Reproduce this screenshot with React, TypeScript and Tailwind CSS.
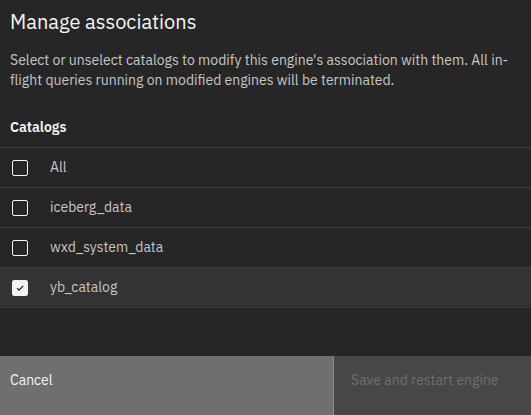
import { useState } from 'react'

const CATALOGS = ['All', 'iceberg_data', 'wxd_system_data', 'yb_catalog'] as const

function CheckBox({ checked }: { checked: boolean }) {
  return (
    <span
      className={`flex h-4 w-4 shrink-0 items-center justify-center rounded-[2px] border ${
        checked ? 'border-[#f4f4f4] bg-[#f4f4f4]' : 'border-[#f4f4f4] bg-transparent'
      }`}
    >
      {checked && (
        <svg width="12" height="12" viewBox="0 0 12 12" fill="none">
          <path d="M3 6.2 L5 8.2 L9.2 3.8" stroke="#161616" strokeWidth="1.1" />
        </svg>
      )}
    </span>
  )
}

export default function App() {
  const [selected, setSelected] = useState<string[]>(['yb_catalog'])

  function toggle(name: string) {
    setSelected(prev => (prev.includes(name) ? prev.filter(n => n !== name) : [...prev, name]))
  }

  return (
    <div
      className="flex h-[415px] w-[531px] flex-col overflow-hidden bg-[#262626] text-[#f4f4f4]"
      style={{ fontFamily: '"IBM Plex Sans", Inter, "Liberation Sans", sans-serif' }}
    >
      <div className="flex-1">
        <h2 className="px-[10px] pt-[8px] text-[20px] leading-[28px] font-normal text-[#f4f4f4]">
          Manage associations
        </h2>

        <p className="mt-[14px] px-[10px] text-[14px] leading-[20px] text-[#c6c6c6]">
          Select or unselect catalogs to modify this engine's association with them. All in-
          <br />
          flight queries running on modified engines will be terminated.
        </p>

        <p className="mt-[27px] px-[10px] text-[14px] leading-[20px] font-semibold text-[#f4f4f4]">
          Catalogs
        </p>

        <ul className="mt-[10px] border-t border-[#393939]">
          {CATALOGS.map(name => {
            const checked = selected.includes(name)
            return (
              <li
                key={name}
                onClick={() => toggle(name)}
                className={`flex h-[40px] cursor-pointer items-center gap-[22px] border-b border-[#393939] pl-[12px] text-[14px] text-[#c6c6c6] ${
                  checked ? 'bg-[#333333]' : ''
                }`}
              >
                <CheckBox checked={checked} />
                <span>{name}</span>
              </li>
            )
          })}
        </ul>
      </div>

      <div className="flex h-[59px] shrink-0">
        <button
          type="button"
          className="flex w-[333px] items-start bg-[#6f6f6f] pt-[14px] pl-[10px] text-left text-[14px] text-[#f4f4f4]"
        >
          Cancel
        </button>
        <div className="w-px bg-[#8d8d8d]" />
        <button
          type="button"
          disabled
          className="flex flex-1 items-start bg-[#474747] pt-[14px] pl-[17px] text-left text-[14px] text-[#6f6f6f]"
        >
          Save and restart engine
        </button>
      </div>
    </div>
  )
}
